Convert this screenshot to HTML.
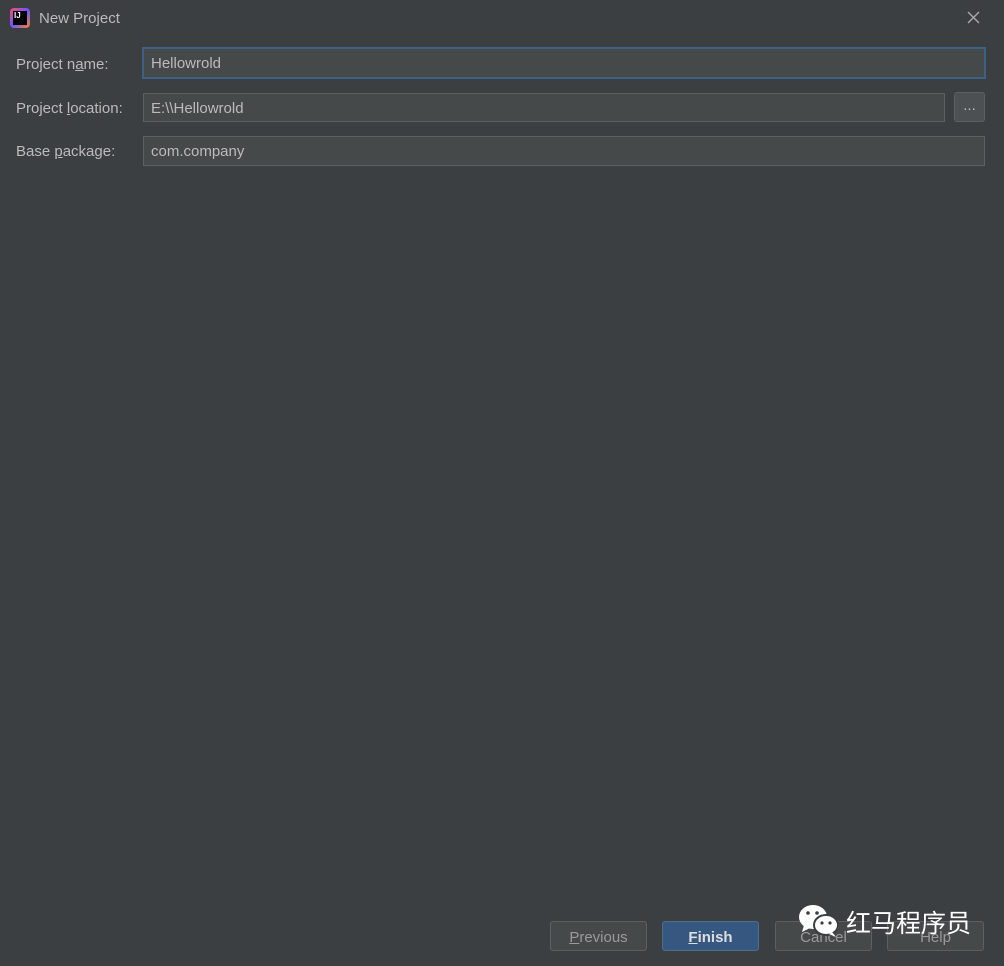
<!DOCTYPE html>
<html><head><meta charset="utf-8"><style>
body{margin:0;width:1004px;height:966px;background:#3c3f41;font-family:"Liberation Sans","Noto Sans CJK SC",sans-serif;color:#bbbbbb;position:relative;overflow:hidden}
.a{position:absolute}
.lbl{font-size:15px;left:16px}
.in{position:absolute;background:#45494a;border:1px solid #5e6060;box-sizing:border-box;font-size:15px;color:#bbbbbb;padding-left:7px;line-height:29px}
.btn{position:absolute;top:921px;width:97px;height:30px;box-sizing:border-box;border:1px solid #5e6060;border-radius:3px;background:#45494a;font-size:15px;text-align:center;line-height:32px;color:#9a9a9a}
</style></head><body>
<div class="a" style="left:10px;top:8px;width:20px;height:20px;border-radius:4px;background:linear-gradient(135deg,#fc4c6e,#6b57ff,#fe7f2d)"></div>
<div class="a" style="left:13px;top:11px;width:14px;height:14px;background:#000;color:#fff;font-size:8px;font-weight:bold;line-height:9px;padding-left:1px;box-sizing:border-box">IJ</div>
<div class="a" style="left:39px;top:10px;font-size:15px;color:#bbbbbb">New Project</div>
<svg class="a" style="left:967px;top:11px" width="13" height="13"><path d="M1 1L12 12M12 1L1 12" stroke="#aaa" stroke-width="1.4"/></svg>
<div class="a lbl" style="top:56px">Project n<u>a</u>me:</div>
<div class="a lbl" style="top:100px">Project <u>l</u>ocation:</div>
<div class="a lbl" style="top:143px">Base <u>p</u>ackage:</div>
<div class="in" style="left:142px;top:47px;width:844px;height:32px;border:2px solid #3d6185;line-height:30px;padding-left:7px">Hellowrold</div>
<div class="in" style="left:143px;top:93px;width:802px;height:29px">E:\\Hellowrold</div>
<div class="in" style="left:954px;top:92px;width:31px;height:30px;border-radius:3px;background:#4c5052;padding:0;text-align:center;line-height:26px">...</div>
<div class="in" style="left:143px;top:136px;width:842px;height:30px">com.company</div>
<div class="btn" style="left:550px"><u>P</u>revious</div>
<div class="btn" style="left:662px;background:#365880;border-color:#4c708c;color:#ddd;font-weight:bold"><u>F</u>inish</div>
<div class="btn" style="left:775px">Cancel</div>
<div class="btn" style="left:887px">Help</div>
<svg class="a" style="left:798px;top:903px" width="44" height="36" viewBox="0 0 44 36"><ellipse cx="15" cy="14" rx="14" ry="12" fill="#fff"/><path d="M6 22 L4 29 L12 25Z" fill="#fff"/><ellipse cx="28" cy="22" rx="12" ry="10" fill="#fff" stroke="#3c3f41" stroke-width="2"/><path d="M34 29 L38 34 L31 31Z" fill="#fff"/><circle cx="10" cy="10" r="1.8" fill="#3c3f41"/><circle cx="19" cy="10" r="1.8" fill="#3c3f41"/><circle cx="24" cy="20" r="1.6" fill="#3c3f41"/><circle cx="32" cy="20" r="1.6" fill="#3c3f41"/></svg>
<div class="a" style="left:846px;top:904px;font-size:25px;color:#fff;font-family:'Noto Sans CJK SC',sans-serif">红马程序员</div>
</body></html>
